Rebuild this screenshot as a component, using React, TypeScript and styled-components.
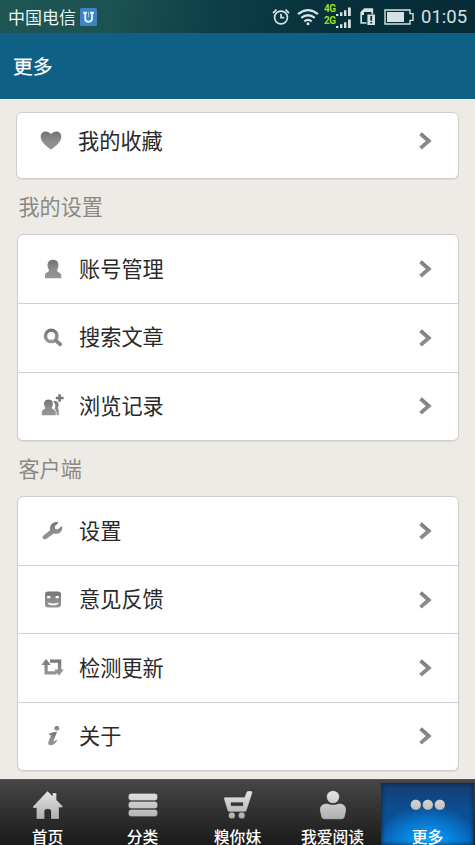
import React from "react";
import styled, { createGlobalStyle, css } from "styled-components";

const GlobalStyle = createGlobalStyle`
  * { box-sizing: border-box; }
  html, body { margin: 0; padding: 0; overflow: hidden; }
  body { font-family: "Noto Sans CJK SC", "Noto Sans", sans-serif; }
`;

const Screen = styled.div`
  width: 475px;
  height: 845px;
  display: flex;
  flex-direction: column;
  background: #eeebe6;
  overflow: hidden;
`;

const StatusBar = styled.header`
  height: 33px;
  flex: none;
  display: flex;
  align-items: center;
  justify-content: space-between;
  padding: 0 7px 0 8px;
  color: #d5e1e2;
  background: linear-gradient(100deg, #1f5553 0%, #1b5252 24%, #0d3f48 45%, #07303b 70%, #062b36 100%);
`;

const Carrier = styled.div`
  display: flex;
  align-items: center;
  gap: 4px;
  font-size: 17px;
  line-height: 30px;
  color: #e9f4f3;
`;

const StatusIcons = styled.div`
  display: flex;
  align-items: center;
  height: 33px;
`;

const Clock = styled.span`
  width: 47px;
  margin-left: 6px;
  font-family: Roboto, sans-serif;
  font-size: 18.5px;
  line-height: 33px;
  padding-top: 2px;
  white-space: nowrap;
`;

const TitleBar = styled.div`
  height: 66px;
  flex: none;
  padding-left: 13px;
  font-size: 19.8px;
  font-weight: 400;
  line-height: 65px;
  color: #fff;
  -webkit-text-stroke: 0.25px #fff;
  background: #0e6085;
`;

const Content = styled.main`
  height: 680px;
  flex: none;
  padding: 13px 16px 0 17px;
  border-top: 1px solid #e6f3f4;
`;

const Card = styled.section<{ $single?: boolean }>`
  border: 1px solid #cfcecc;
  border-radius: 6px;
  background: #fff;
  box-shadow: 0 1px 1px #dddad6;
  overflow: hidden;
  ${(p) =>
    p.$single
      ? css`
          height: 67px;
          margin-top: -1px;
          margin-left: -1px;
          padding-bottom: 11px;
        `
      : ""}
`;

const Row = styled.div<{ $compact?: boolean }>`
  height: ${(p) => (p.$compact ? 56 : 68.3)}px;
  display: flex;
  align-items: center;
  padding-right: 26px;
  & + & {
    border-top: 1px solid #d0d0d0;
  }
`;

const IconSlot = styled.span`
  width: 61px;
  padding-left: 22px;
  display: flex;
`;

const RowLabel = styled.span`
  flex: 1;
  font-size: 21.2px;
  line-height: 30px;
  padding-bottom: 3px;
  color: #292929;
`;

const GroupTitle = styled.h2`
  margin: 0;
  height: 55px;
  padding-left: 1.5px;
  font-size: 21.1px;
  font-weight: 400;
  line-height: 55px;
  color: #8b8984;
`;

const TabBar = styled.nav`
  height: 66px;
  flex: none;
  display: grid;
  grid-template-columns: repeat(5, 95px);
  background: linear-gradient(#464646, #222 82%, #1b1b1b);
  border-top: 1px solid #555;
`;

const Tab = styled.div<{ $active?: boolean }>`
  display: flex;
  flex-direction: column;
  align-items: center;
  padding-top: 10px;
  ${(p) =>
    p.$active
      ? css`
          margin: 3px 1px 0 1px;
          padding-top: 7px;
          background: radial-gradient(ellipse 55px 43px at 50% 105%, #18b5ff 0%, #0784df 48%, rgba(7, 105, 194, 0) 100%),
            linear-gradient(#153e70, #0c4d91 40%, #0757a9);
          box-shadow: inset 0 0 5px #061e38;
        `
      : ""}
`;

const TabLabel = styled.span`
  margin-top: 7px;
  font-size: 15.8px;
  font-weight: 500;
  line-height: 16px;
  color: #fff;
  white-space: nowrap;
`;

type IconName = "heart" | "person" | "search" | "people" | "wrench" | "face" | "repeat" | "info";

const drawings: Record<IconName, React.ReactNode> = {
  heart: <path d="M12 20.8C7 16.8 1.7 12.8 1.7 7.7 1.7 1.5 9 .9 12 5.2 15.2.9 22.3 1.5 22.3 7.7c0 5.1-5.3 9.1-10.3 13.1Z" />,
  person: <path d="M8.7 12.4C6.7 9.5 6.7 2.8 13 2.8s6.3 6.7 4.3 9.6c-.5.9-.2 2 .8 2.5 2.3.8 3.2 1.8 3.2 3.8v2.6H4.9v-2.6c0-2 .7-3 3-3.8 1-.5 1.3-1.6.8-2.5Z" />,
  search: (
    <>
      <circle cx="11.2" cy="9.9" r="5.7" fill="none" stroke="url(#grey)" strokeWidth="3.5" />
      <path d="m15.9 14.6 4.3 3.6" stroke="#858585" strokeWidth="3.8" strokeLinecap="round" />
    </>
  ),
  people: (
    <>
      <path d="M13.4 7.4c4.2-1.8 6.6 2.9 4.4 6.7l1 1.8v5.4h-2.2c.2-3-.2-5-2-6.3 1.4-2.5.8-5.7-1.2-7.6Z" />
      <path d="M5.3 14C2.8 9.9 4.1 5.6 8.5 5.6s5.7 4.3 3.2 8.4c-.3 1 4 1.6 4.1 4.1v3.2H1.9v-3.2c.1-2.5 3.7-3.1 3.4-4.1Z" />
      <path d="M19.6.2v7.6M15.8 4h7.8" stroke="#777" strokeWidth="2.6" />
    </>
  ),
  wrench: <path d="m2.9 17 7.2-5.8C8.9 6.6 13 2.2 17.2 3l1.3.7-3.6 3.6.2 2.5 2.6.6 4-3.5c1.9 4.9-2.9 9.4-8 7.5L6.4 20c-2.5 1.6-4.9-1.4-3.5-3Z" />,
  face: (
    <>
      <rect x="5" y="3.5" width="16" height="16" rx="3" />
      <path d="M7.2 8h3.2v2.2H7.2zM15.6 8h3.2v2.2h-3.2z" fill="#fff" />
      <path d="M7.5 14.5q5.5 1.8 11 0c-.4 3.8-10.6 3.8-11 0Z" fill="#fff" />
    </>
  ),
  repeat: (
    <path d="M1.4 9 6.1 2.9 10.8 9H7.7v6.2h9v3.2H4.5V9ZM10 3.6h11.3v10h2.4L19 19.7l-4.7-6.1h3.6V6.8H10Z" />
  ),
  info: (
    <>
      <ellipse cx="16.8" cy="4.4" rx="2.5" ry="2.3" />
      <path d="M9.1 9.7c2.6-1.1 4.7-1.7 7.9-1.6l-3.6 9.2c1.1.1 2-.7 2.8-1.6l1 .8c-2.2 3.5-4.4 4.9-6.5 4.8-1.9-.1-3-1.4-2.3-3.3l2.8-7-2 .3Z" />
    </>
  ),
};

const RowIcon = ({ name }: { name: IconName }) => (
  <svg width="24" height="24" viewBox="0 0 24 24" fill="url(#grey)">
    <defs>
      <linearGradient id="grey" x1="0" y1="0" x2="0" y2="1">
        <stop offset="0" stopColor="#747474" />
        <stop offset=".5" stopColor="#8b8b8b" />
        <stop offset="1" stopColor="#969696" />
      </linearGradient>
    </defs>
    {drawings[name]}
  </svg>
);

const Chevron = () => (
  <svg width="14" height="20" viewBox="0 0 14 20" fill="none">
    <path d="m2.5 2.8 8.2 7.2-8.2 7.1" stroke="#8a8a8a" strokeWidth="3.9" />
    <path d="m3.1 2.1 8.4 7.6" stroke="#707070" strokeWidth="1" />
  </svg>
);

type Item = { icon: IconName; label: string };

const ListRow = ({ icon, label, compact }: Item & { compact?: boolean }) => (
  <Row $compact={compact}>
    <IconSlot>
      <RowIcon name={icon} />
    </IconSlot>
    <RowLabel>{label}</RowLabel>
    <Chevron />
  </Row>
);

const accountItems: Item[] = [
  { icon: "person", label: "账号管理" },
  { icon: "search", label: "搜索文章" },
  { icon: "people", label: "浏览记录" },
];

const clientItems: Item[] = [
  { icon: "wrench", label: "设置" },
  { icon: "face", label: "意见反馈" },
  { icon: "repeat", label: "检测更新" },
  { icon: "info", label: "关于" },
];

const tabs = [
  {
    label: "首页",
    art: <path d="M1 16.5 15.5 1l5 5V3h4v7l6 6v1.5h-3.5V29H19v-8q0-2-3.2-2t-3.3 2v8H4.5V18H1Z" />,
  },
  {
    label: "分类",
    art: (
      <>
        <rect x="1.5" y="3.5" width="29" height="7" rx="2.7" />
        <rect x="1.5" y="11.5" width="29" height="7" rx="2.7" />
        <rect x="1.5" y="19.5" width="29" height="7" rx="2.7" />
      </>
    ),
  },
  {
    label: "糗你妹",
    art: (
      <>
        <path fillRule="evenodd" d="M3 7.2h19.5l2-4.9q.5-1.3 2-1.3h2.3q2.2.2 1.4 2.3L24.6 20.6q-.3 1.2-1.6 1.2H7.2q-1.3 0-1.7-1.2L2 9Q1.8 7.4 3 7.2ZM9 12.6v3.2h12v-3.2Z" />
        <circle cx="9.8" cy="25.4" r="3.2" />
        <circle cx="19.7" cy="25.4" r="3.2" />
      </>
    ),
  },
  {
    label: "我爱阅读",
    art: (
      <>
        <circle cx="16" cy="7" r="6.3" />
        <path d="M10 13.5q6 2.6 12 0c5 0 7.4 3 7.1 7l-1.4 6.5q-.5 2.1-2.8 2.3H7.1Q4.8 29.1 4.3 27l-1.4-6.5c-.3-4 2.1-7 7.1-7Z" />
      </>
    ),
  },
  {
    label: "更多",
    art: (
      <>
        <circle cx="3.8" cy="14.7" r="5.3" />
        <circle cx="15.8" cy="14.7" r="5.3" />
        <circle cx="27.8" cy="14.7" r="5.3" />
      </>
    ),
  },
];

const TabIcon = ({ children }: { children: React.ReactNode }) => (
  <svg width="34" height="32" viewBox="-1 0 34 32" fill="url(#silver)" stroke="#111" strokeOpacity=".3" strokeWidth=".6" overflow="visible">
    <defs>
      <linearGradient id="silver" gradientUnits="userSpaceOnUse" x1="0" y1="2" x2="0" y2="30">
        <stop offset="0" stopColor="#e2e2e2" />
        <stop offset="1" stopColor="#adadad" />
      </linearGradient>
    </defs>
    {children}
  </svg>
);

const CarrierBadge = () => (
  <svg width="17" height="18" viewBox="0 0 17 18" fill="none">
    <rect width="17" height="18" rx="1.5" fill="#3d83c5" />
    <path d="M3.2 4.8H7M10 4.8h4M5.2 5v5.8c0 4 6.8 4 6.8 0V5" stroke="#d7efff" strokeWidth="2" />
    <path d="M8.6 4v5" stroke="#9bd0ef" />
  </svg>
);

const AlarmIcon = () => (
  <svg width="18" height="18" viewBox="0 0 18 18" fill="none" stroke="currentColor" strokeWidth="1.7">
    <circle cx="9" cy="9.5" r="6.4" />
    <path d="M9 5.8v3.9h3.2M1 5.2 4.5 1.7M13.5 1.7 17 5.2" />
  </svg>
);

const WifiIcon = () => (
  <svg width="22" height="18" viewBox="0 0 22 18" fill="none" stroke="currentColor" strokeWidth="2.2">
    <path d="M1 6.2q10-8 20 0M4.2 9.9q6.8-5.3 13.6 0M7.3 13.3q3.7-2.8 7.4 0" />
    <circle cx="11" cy="15.8" r="1.5" fill="currentColor" stroke="none" />
  </svg>
);

const SignalBlock = styled.div`
  display: grid;
  grid-template-columns: 12px 15px;
  grid-template-rows: 12px 12px;
  margin: 0 9px 3px 5px;
  align-items: end;
`;

const NetworkType = styled.span`
  align-self: start;
  font: 700 10px/12px Roboto, sans-serif;
  letter-spacing: -0.4px;
  color: #9bdd18;
`;

const SignalBars = () => (
  <svg width="15" height="9" viewBox="0 0 15 9" fill="currentColor" overflow="visible">
    <path d="M0 7h2.4v2H0zM4 5.2h2.4V9H4zM8 3.2h2.4V9H8zM12 .5h2.8V9H12z" transform="translate(0 1)" />
  </svg>
);

const SimIcon = () => (
  <svg width="16" height="18" viewBox="0 0 16 18" fill="none">
    <path d="M6.5 15H1.2V4.5L4.5 1h7.8v5" stroke="currentColor" strokeWidth="1.7" />
    <path d="M1 5 5 1h7v3H4v3H1z" fill="currentColor" />
    <path d="M7.4 6.5H15V17H7.4z" fill="currentColor" />
    <path d="M11.2 8v4.8M11.2 14v1.6" stroke="#092f39" strokeWidth="1.8" />
  </svg>
);

const BatteryIcon = () => (
  <svg width="31" height="16" viewBox="0 0 31 16" fill="none">
    <path d="M1 1h25v3.6h3v6.8h-3V15H1z" stroke="currentColor" strokeWidth="1.4" />
    <path d="M3 3h17v10H3z" fill="currentColor" />
  </svg>
);

const SimSlot = styled.span`
  display: flex;
  margin-right: 8px;
`;

const WifiSlot = styled.span`
  display: flex;
  margin-left: 7px;
`;

export default function App() {
  return (
    <>
      <GlobalStyle />
      <Screen>
        <StatusBar>
          <Carrier>
            中国电信
            <CarrierBadge />
          </Carrier>
          <StatusIcons>
            <AlarmIcon />
            <WifiSlot>
              <WifiIcon />
            </WifiSlot>
            <SignalBlock>
              <NetworkType>4G</NetworkType>
              <SignalBars />
              <NetworkType>2G</NetworkType>
              <SignalBars />
            </SignalBlock>
            <SimSlot>
              <SimIcon />
            </SimSlot>
            <BatteryIcon />
            <Clock>01:05</Clock>
          </StatusIcons>
        </StatusBar>
        <TitleBar>更多</TitleBar>
        <Content>
          <Card $single>
            <ListRow icon="heart" label="我的收藏" compact />
          </Card>
          <GroupTitle>我的设置</GroupTitle>
          <Card>
            {accountItems.map((item) => (
              <ListRow key={item.label} {...item} />
            ))}
          </Card>
          <GroupTitle>客户端</GroupTitle>
          <Card>
            {clientItems.map((item) => (
              <ListRow key={item.label} {...item} />
            ))}
          </Card>
        </Content>
        <TabBar>
          {tabs.map((tab, i) => (
            <Tab key={tab.label} $active={i === 4}>
              <TabIcon>{tab.art}</TabIcon>
              <TabLabel>{tab.label}</TabLabel>
            </Tab>
          ))}
        </TabBar>
      </Screen>
    </>
  );
}
